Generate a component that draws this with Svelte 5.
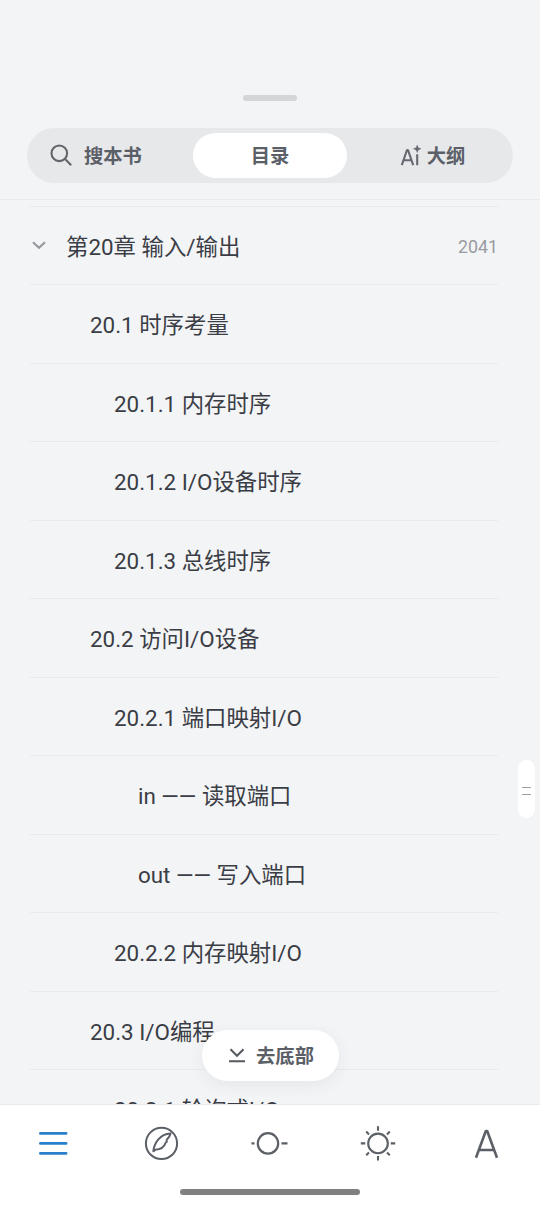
<script>
  const rows = [
    { text: '第20章 输入/输出', level: 0, page: '2041' },
    { text: '20.1 时序考量', level: 1 },
    { text: '20.1.1 内存时序', level: 2 },
    { text: '20.1.2 I/O设备时序', level: 2 },
    { text: '20.1.3 总线时序', level: 2 },
    { text: '20.2 访问I/O设备', level: 1 },
    { text: '20.2.1 端口映射I/O', level: 2 },
    { text: 'in —— 读取端口', level: 3 },
    { text: 'out —— 写入端口', level: 3 },
    { text: '20.2.2 内存映射I/O', level: 2 },
    { text: '20.3 I/O编程', level: 1 },
    { text: '20.3.1 轮询式I/O', level: 2 }
  ];
</script>

<div class="screen">
  <header>
    <div class="grip"></div>
    <div class="tabs">
      <div class="tab search">
        <svg width="24" height="24" viewBox="0 0 24 24" fill="none" stroke="#62666b" stroke-width="2.1"><circle cx="10.3" cy="10.3" r="7.8" /><path d="M16 16l6.2 6.2" /></svg>
        <span>搜本书</span>
      </div>
      <div class="tab active"><span>目录</span></div>
      <div class="tab outline">
        <svg width="21" height="22" viewBox="0 0 21 22" fill="none" stroke="#656a70" stroke-width="2.1" stroke-linejoin="bevel"><path d="M1.8 20.2L7 5h1L13.2 20.2M4 15.3h7M17.2 9.2v11" /><path d="M17.2 0l1.1 2.7 2.7 1.1-2.7 1.1-1.1 2.7-1.1-2.7-2.7-1.1 2.7-1.1z" fill="#656a70" stroke="#656a70" stroke-width="0.4" /></svg>
        <span>大纲</span>
      </div>
    </div>
  </header>

  <main>
    {#each rows as row}
      <div class="row level{row.level}">
        {#if row.level === 0}
          <svg class="chevron" width="16" height="12" viewBox="0 0 16 12" fill="none" stroke="#96999f" stroke-width="2.2"><path d="M2 3.2l6 5.5 6-5.5" /></svg>
        {/if}
        <span class="title">{row.text}</span>
        {#if row.page}<span class="page">{row.page}</span>{/if}
      </div>
    {/each}
    <div class="bottom-btn">
      <svg width="18" height="17" viewBox="0 0 18 17" fill="none" stroke="#54595f" stroke-width="2"><path d="M2.5 2.2L9 8.8l6.5-6.6M1 14.3h16" /></svg>
      <span>去底部</span>
    </div>
    <div class="scroll-thumb"><i></i><i></i></div>
  </main>

  <footer>
    <nav>
      <div><svg width="40" height="40" viewBox="0 0 40 40" fill="none" stroke="#2a80cd" stroke-width="2.8" stroke-linecap="round"><path d="M6.4 10.4h25.7M6.4 20.4h25.7M6.4 30.4h25.7" /></svg></div>
      <div><svg width="40" height="40" viewBox="0 0 40 40" fill="none" stroke="#5b6067" stroke-width="2"><circle cx="19.5" cy="20.4" r="15.6" /><path d="M11.2 28.8C12.2 20.5 17.5 10.8 28.6 10.4C27.8 13.2 26.4 15.2 24.6 17L24.8 18.8L23.6 19.8C22.3 24.2 18.6 26.6 13.2 26.8L11.2 28.8" stroke-linejoin="round" /></svg></div>
      <div><svg width="40" height="40" viewBox="0 0 40 40" fill="none" stroke="#5b6067" stroke-width="2.2"><circle cx="18" cy="20.4" r="10.2" /><path d="M1.5 20.4h3M31.5 20.4h6" /></svg></div>
      <div><svg width="40" height="40" viewBox="0 0 40 40" fill="none" stroke="#5b6067" stroke-width="2.1"><circle cx="20" cy="20.4" r="9.8" /><path d="M20 3.2v4.5M20 33.1v4.5M2.8 20.4h4.5M32.7 20.4h4.5M8.2 8.6l2.8 2.8M29 29.4l2.8 2.8M31.8 8.6L29 11.4M11 29.4l-2.8 2.8" /></svg></div>
      <div><svg width="40" height="40" viewBox="0 0 40 40" fill="none" stroke="#5b6067" stroke-width="2.6" stroke-linejoin="bevel"><path d="M10 34.8L19.8 8h1.4L31 34.8M13.3 27h14.4" /></svg></div>
    </nav>
    <div class="home"></div>
  </footer>
</div>

<style>
  :global(body) { background: #f3f4f6; }
  .screen {
    width: 540px; height: 1206px; display: flex; flex-direction: column; overflow: hidden;
    background: #f3f4f6; color: #3a3d45;
    font-family: Roboto, "Noto Sans CJK SC", sans-serif;
  }
  header {
    box-sizing: border-box; height: 200px; padding: 95px 27px 0; flex: none;
    display: flex; flex-direction: column; align-items: center;
    border-bottom: 1px solid #e9eaec;
  }
  .grip { width: 54px; height: 6px; border-radius: 3px; background: #d4d5d7; }
  .tabs {
    box-sizing: border-box; width: 486px; height: 55px; margin-top: 27px; padding: 5px;
    display: grid; grid-template-columns: 161px 154px 161px; border-radius: 28px; background: #e7e8ea;
  }
  .tab {
    display: flex; align-items: center; justify-content: center;
    font: 700 19.3px/28px "Noto Sans CJK SC", sans-serif; color: #5b6068;
    border-radius: 23px;
  }
  .tab span { padding-bottom: 2px; }
  .active { background: #fff; }
  .search { justify-content: flex-start; padding-left: 17px; gap: 11px; }
  .search svg { margin-bottom: 1px; }
  .outline { gap: 6px; padding-left: 10px; }
  main { position: relative; flex: 1; min-height: 0; overflow: hidden; padding: 5.5px 42px 0 30px; }
  .row {
    box-sizing: border-box; height: 78.5px; display: flex; align-items: center;
    border-top: 1px solid #e9eaec; font-size: 22.4px; line-height: 30px; white-space: pre;
  }
  .title { padding-top: 3px; }
  .level1 { padding-left: 60px; }
  .level2 { padding-left: 84px; }
  .level3 { padding-left: 108px; }
  .chevron { margin: 0 19px 0 1px; }
  .page { margin-left: auto; padding-top: 4px; font-size: 17.8px; color: #989ba1; }
  .bottom-btn {
    position: absolute; left: 202px; top: 829.5px; width: 137px; height: 51px; border-radius: 26px;
    display: flex; align-items: center; justify-content: center; gap: 10px; background: #fff;
    box-shadow: 0 4px 16px rgba(40, 50, 65, .07);
    font: 700 19.3px/28px "Noto Sans CJK SC", sans-serif; color: #5b6067;
  }
  .bottom-btn svg { margin-left: 1px; }
  .scroll-thumb {
    box-sizing: border-box; position: absolute; left: 518px; top: 560px; width: 17px; height: 58px; padding-top: 3px; border-radius: 9px;
    display: flex; flex-direction: column; align-items: center; justify-content: center; gap: 6px;
    background: #fff;
  }
  .scroll-thumb i { width: 9px; height: 1px; background: #a0a0a0; }
  footer {
    box-sizing: border-box; height: 102px; flex: none; background: #fff; border-top: 1px solid #e9eaec;
    display: flex; flex-direction: column; align-items: center;
  }
  nav { width: 540px; height: 40px; margin-top: 18px; display: grid; grid-template-columns: repeat(5, 1fr); }
  nav div { display: flex; justify-content: center; }
  .home { width: 180px; height: 6px; margin-top: 26px; border-radius: 3px; background: #808080; }
</style>
